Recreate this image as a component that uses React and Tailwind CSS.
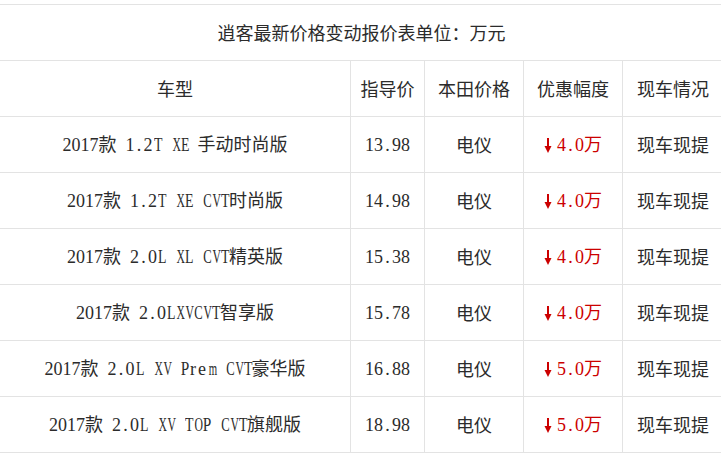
import React from "react";

const rows = [
  ["2017款 1.2T XE 手动时尚版", "13.98", "4.0万"],
  ["2017款 1.2T XE CVT时尚版", "14.98", "4.0万"],
  ["2017款 2.0L XL CVT精英版", "15.38", "4.0万"],
  ["2017款 2.0LXVCVT智享版", "15.78", "4.0万"],
  ["2017款 2.0L XV Prem CVT豪华版", "16.88", "5.0万"],
  ["2017款 2.0L XV TOP CVT旗舰版", "18.98", "5.0万"],
];

const squeeze = {
  C: "scale-x-[0.7]",
  V: "scale-x-[0.65]",
  X: "scale-x-[0.65]",
  O: "scale-x-[0.65]",
  T: "scale-x-[0.77]",
  E: "scale-x-[0.77]",
  L: "scale-x-[0.77]",
  P: "scale-x-[0.85]",
  m: "scale-x-[0.6]",
};

const cell = "border border-[#e3e3e3] h-[56px] p-0 text-center align-middle font-normal";

function Mixed({ text }) {
  const parts = text.match(/[\x20-\x7e]+|[^\x20-\x7e]+/g) || [];
  return (
    <>
      {parts.map((p, i) =>
        /^[\x20-\x7e]+$/.test(p) ? (
          <span key={i} style={{ fontFamily: '"Liberation Serif", serif' }}>
            {p.split("").map((c, j) => (
              <span
                key={j}
                className={
                  "inline-block w-[9px] text-center whitespace-pre " + (squeeze[c] || "")
                }
              >
                {c}
              </span>
            ))}
          </span>
        ) : (
          <span key={i}>{p}</span>
        )
      )}
    </>
  );
}

function DownArrow() {
  return (
    <svg
      width="8"
      height="15"
      viewBox="0 0 8 15"
      className="inline-block align-[-2px] mr-[5px]"
      aria-hidden="true"
    >
      <rect x="3" y="0" width="2" height="10" fill="#cc0000" />
      <path d="M0.5 8 L7.5 8 L4 15 Z" fill="#cc0000" />
    </svg>
  );
}

export default function App() {
  return (
    <div
      className="w-[721px] h-[453px] overflow-hidden bg-white pt-[4px] text-[18px] text-[#2b2b2b]"
      style={{ fontFamily: '"Noto Sans CJK SC", sans-serif' }}
    >
      <table className="border-collapse ml-[-1px] w-[724px] table-fixed">
        <colgroup>
          <col className="w-[351px]" />
          <col className="w-[74px]" />
          <col className="w-[99px]" />
          <col className="w-[99px]" />
          <col className="w-[101px]" />
        </colgroup>
        <thead>
          <tr>
            <th colSpan={5} className={cell}>
              逍客最新价格变动报价表单位：万元
            </th>
          </tr>
          <tr>
            <th className={cell}>车型</th>
            <th className={cell}>指导价</th>
            <th className={cell}>本田价格</th>
            <th className={cell}>优惠幅度</th>
            <th className={cell}>现车情况</th>
          </tr>
        </thead>
        <tbody>
          {rows.map((r, i) => (
            <tr key={i}>
              <td className={cell}>
                <Mixed text={r[0]} />
              </td>
              <td className={cell}>
                <Mixed text={r[1]} />
              </td>
              <td className={cell}>电仪</td>
              <td className={cell + " text-[#cc0000]"}>
                <DownArrow />
                <Mixed text={r[2]} />
              </td>
              <td className={cell}>现车现提</td>
            </tr>
          ))}
        </tbody>
      </table>
    </div>
  );
}
